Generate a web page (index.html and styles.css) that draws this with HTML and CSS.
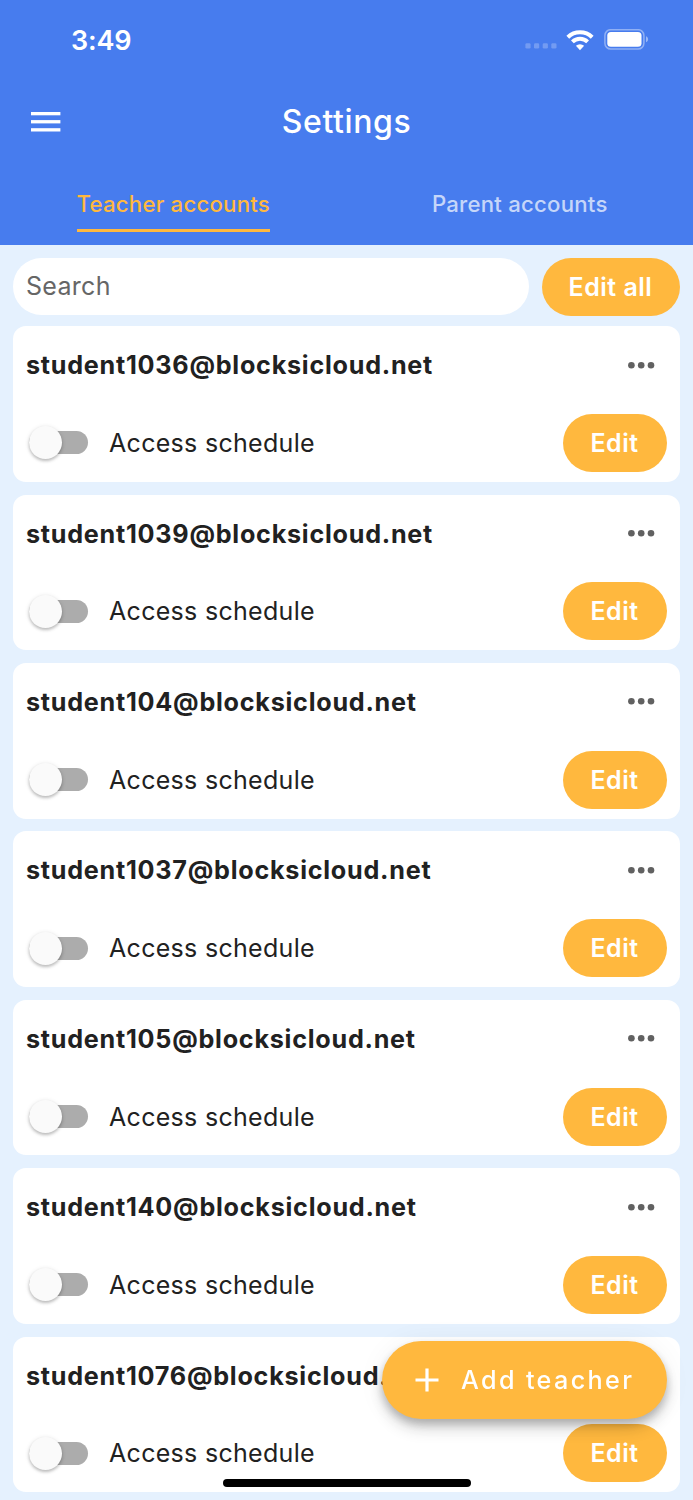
FILE: index.html
```
<!DOCTYPE html>
<html lang="en">

<head>
  <meta charset="UTF-8">
  <meta name="viewport" content="width=device-width, initial-scale=1.0">
  <title>Settings</title>
  <link rel="stylesheet" href="styles.css">
</head>

<body>
  <header>
    <div class="status-bar">
      <span class="time">3:49</span>
      <div class="status-icons">
        <svg class="signal" width="32" height="6" viewBox="0 0 32 6" fill="#fff" fill-opacity="0.24">
          <rect x="0.4" y="0.2" width="5.2" height="5.4" rx="1.3"/>
          <rect x="9" y="0.2" width="5.2" height="5.4" rx="1.3"/>
          <rect x="17.7" y="0.2" width="5.2" height="5.4" rx="1.3"/>
          <rect x="26.3" y="0.2" width="5.2" height="5.4" rx="1.3"/>
        </svg>
        <svg class="wifi" width="28" height="21" viewBox="0 0 28 21" fill="none" stroke="#fff" stroke-width="4">
          <path d="M1.8 7.2a17.6 17.6 0 0 1 24.4 0"/>
          <path d="M6.4 11.9a10.9 10.9 0 0 1 15.2 0"/>
          <path d="M14 20.2l-4.1-4.4a5.9 5.9 0 0 1 8.2 0z" fill="#fff" stroke="none"/>
        </svg>
        <svg class="battery" width="45" height="22" viewBox="0 0 45 22">
          <rect x="0.9" y="0.7" width="39" height="19.4" rx="5.8" fill="none" stroke="#fff" stroke-opacity="0.4" stroke-width="1.5"/>
          <rect x="3.3" y="3" width="34.2" height="14.8" rx="3.6" fill="#fff"/>
          <path d="M42 7.2c2.8 1 2.8 5 0 6z" fill="#fff" fill-opacity="0.45"/>
        </svg>
      </div>
    </div>

    <div class="app-bar">
      <svg class="menu" width="30" height="20" viewBox="0 0 30 20" fill="#fff">
        <rect y="0" width="29.4" height="3.3"/>
        <rect y="8.1" width="29.4" height="3.3"/>
        <rect y="16.2" width="29.4" height="3.3"/>
      </svg>
      <h1>Settings</h1>
    </div>

    <nav class="tabs">
      <a class="tab active"><span>Teacher accounts</span></a>
      <a class="tab"><span>Parent accounts</span></a>
    </nav>
  </header>

  <main>
    <div class="search-row">
      <input type="text" class="search" placeholder="Search">
      <button class="btn btn-all">Edit all</button>
    </div>

    <div id="account-list"></div>
  </main>

  <button class="add-btn">
    <svg width="24" height="24" viewBox="0 0 24 24" stroke="#fff" stroke-width="3.2">
      <path d="M0.5 12h23M12 0.5v23"/>
    </svg>
    <span>Add teacher</span>
  </button>
  <div class="home-indicator"></div>

  <template id="card-template">
    <div class="card">
      <div class="card-top">
        <span class="email"></span>
        <svg class="more" width="27" height="7" viewBox="0 0 27 7" fill="#616161">
          <circle cx="3.4" cy="3.3" r="3.3"/>
          <circle cx="13.2" cy="3.3" r="3.3"/>
          <circle cx="23" cy="3.3" r="3.3"/>
        </svg>
      </div>
      <div class="card-bottom">
        <div class="switch"></div>
        <span class="label">Access schedule</span>
        <button class="btn">Edit</button>
      </div>
    </div>
  </template>

  <script>
    const accounts = ['student1036', 'student1039', 'student104', 'student1037', 'student105', 'student140', 'student1076'];
    const list = document.getElementById('account-list');
    const template = document.getElementById('card-template');

    accounts.forEach(function (name) {
      const card = template.content.cloneNode(true);
      card.querySelector('.email').textContent = name + '@blocksicloud.net';
      list.appendChild(card);
    });
  </script>
</body>

</html>
```
FILE: styles.css
```
* {
  box-sizing: border-box;
}

body {
  margin: 0;
  height: 1500px;
  overflow: hidden;
  background-color: #e5f1fe;
  color: #212121;
  font-family: Inter, Roboto, sans-serif;
}

button,
input {
  font-family: inherit;
  border: none;
}

/* Header */
header {
  height: 244.6px;
  background-color: #477cee;
  color: #ffffff;
}

.status-bar {
  height: 80px;
  padding: 0 44px 0 71px;
  display: flex;
  align-items: center;
  justify-content: space-between;
}

.time {
  font-size: 27px;
  font-weight: 600;
  letter-spacing: -0.2px;
}

.status-icons {
  display: flex;
  align-items: center;
}

.signal {
  margin: 12px 9.5px 0 0;
}

.wifi {
  margin-right: 10px;
}

.app-bar {
  height: 84px;
  padding: 0 31px;
  display: grid;
  grid-template-columns: 30px 1fr 30px;
  align-items: center;
}

h1 {
  margin: 0 0 1px;
  text-align: center;
  font-size: 32px;
  font-weight: 500;
  letter-spacing: 0.6px;
}

.tabs {
  display: flex;
  height: 68px;
}

.tab {
  flex: 1;
  display: flex;
  justify-content: center;
  font-size: 22.2px;
  font-weight: 500;
  color: rgba(255, 255, 255, 0.7);
}

.tab span {
  height: 67.6px;
  line-height: 79px;
  letter-spacing: 0.22px;
}

.tab.active span {
  color: #ffb83e;
  border-bottom: 3.3px solid #ffb83e;
}

/* Content */
main {
  padding: 13px;
}

.search-row {
  display: flex;
  align-items: center;
  gap: 13px;
  margin-bottom: 10.5px;
}

.search {
  flex: 1;
  min-width: 0;
  height: 57px;
  padding: 0 13px 2px;
  border-radius: 29px;
  background-color: #ffffff;
  font-size: 25px;
  letter-spacing: 0.3px;
}

.search::placeholder {
  color: #666666;
  opacity: 1;
}

.btn {
  width: 104px;
  height: 58px;
  padding: 0 1px 0 0;
  border-radius: 29px;
  background-color: #ffb83e;
  color: #ffffff;
  font-size: 25px;
  font-weight: 600;
  letter-spacing: 0.5px;
}

.btn-all {
  width: 138px;
}

.card {
  height: 155.6px;
  margin-bottom: 12.85px;
  padding: 0 13px 9.9px;
  border-radius: 13px;
  background-color: #ffffff;
  display: flex;
  flex-direction: column;
  justify-content: space-between;
}

.card-top {
  height: 78px;
  display: flex;
  align-items: center;
  justify-content: space-between;
}

.email {
  font-size: 25.2px;
  font-weight: 700;
  letter-spacing: 0.74px;
}

.more {
  margin-right: 12px;
}

.card-bottom {
  display: flex;
  align-items: center;
}

.switch {
  width: 58.5px;
  height: 23px;
  margin: 0 21.5px 0 3px;
  border-radius: 12px;
  background-color: #acacac;
  display: flex;
  align-items: center;
}

.switch::before {
  content: "";
  width: 33px;
  height: 33px;
  flex: none;
  margin-left: -0.5px;
  border-radius: 50%;
  background-color: #fafafa;
  box-shadow: 0 2px 3px rgba(0, 0, 0, 0.2), 0 1px 5px rgba(0, 0, 0, 0.12);
}

.label {
  flex: 1;
  font-size: 25px;
  letter-spacing: 0.3px;
}

/* Floating button */
.add-btn {
  position: fixed;
  right: 26px;
  bottom: 81px;
  width: 285px;
  height: 78px;
  padding: 0 0 0 33px;
  border-radius: 39px;
  background-color: #ffb83e;
  color: #ffffff;
  display: flex;
  align-items: center;
  gap: 22px;
  font-size: 25.2px;
  font-weight: 500;
  letter-spacing: 2.35px;
  box-shadow: 0 5px 8px rgba(0, 0, 0, 0.2), 0 10px 16px rgba(0, 0, 0, 0.14), 0 2px 29px rgba(0, 0, 0, 0.06);
}

.home-indicator {
  position: fixed;
  left: 223px;
  bottom: 13px;
  width: 247.5px;
  height: 8.5px;
  border-radius: 5px;
  background-color: #000000;
}
```
